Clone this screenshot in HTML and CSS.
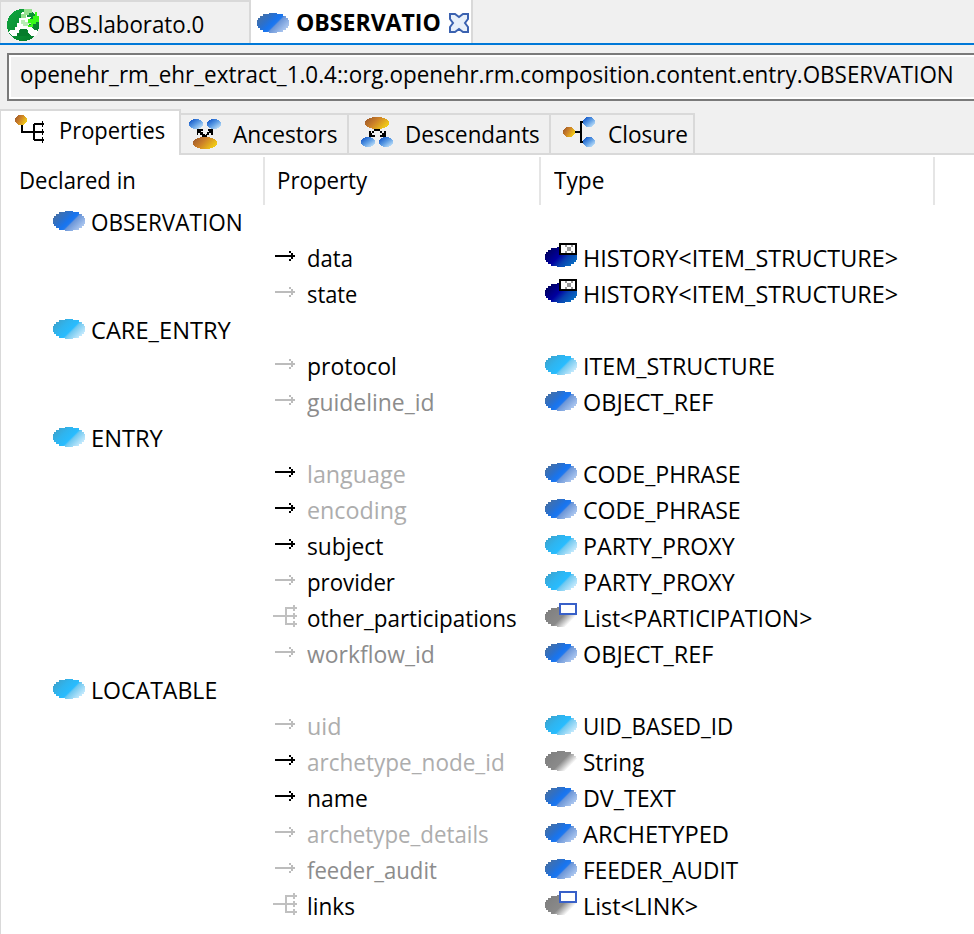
FILE: index.html
```
<!DOCTYPE html>
<html lang="en">
<head>
<meta charset="utf-8">
<title>OBSERVATION</title>
<link rel="stylesheet" href="styles.css">
</head>
<body>
<svg class="defs" width="0" height="0">
  <defs>
    <linearGradient id="g-class" gradientUnits="userSpaceOnUse" x1="3" y1="3" x2="22" y2="22"><stop offset="0" stop-color="#4470a8"/><stop offset=".3" stop-color="#2b70cc"/><stop offset=".5" stop-color="#1874ee"/><stop offset=".6" stop-color="#1f78ee"/><stop offset=".66" stop-color="#6c96d8"/><stop offset="1" stop-color="#a8c4ee"/></linearGradient>
    <linearGradient id="g-abstract" gradientUnits="userSpaceOnUse" x1="3" y1="3" x2="22" y2="22"><stop offset="0" stop-color="#3ca4d0"/><stop offset=".3" stop-color="#2fb4ee"/><stop offset=".6" stop-color="#28bcff"/><stop offset=".67" stop-color="#70c8f0"/><stop offset="1" stop-color="#c0e8fc"/></linearGradient>
    <linearGradient id="g-primitive" gradientUnits="userSpaceOnUse" x1="3" y1="3" x2="22" y2="22"><stop offset="0" stop-color="#808080"/><stop offset=".55" stop-color="#8a8a8a"/><stop offset=".9" stop-color="#fff"/></linearGradient>
    <linearGradient id="g-generic" gradientUnits="userSpaceOnUse" x1="3" y1="3" x2="22" y2="22"><stop offset="0" stop-color="#000060"/><stop offset=".45" stop-color="#0000a0"/><stop offset=".7" stop-color="#0840b0"/><stop offset="1" stop-color="#0868c0"/></linearGradient>
    <linearGradient id="g-orange" x1="0" y1="0" x2="1" y2=".5"><stop offset="0" stop-color="#94522c"/><stop offset=".5" stop-color="#cc8028"/><stop offset="1" stop-color="#f0c818"/></linearGradient>
    <linearGradient id="g-blue" x1="0" y1="0" x2="1" y2="1"><stop offset=".1" stop-color="#1458c8"/><stop offset=".5" stop-color="#5c9ce4"/><stop offset="1" stop-color="#dcf4ff"/></linearGradient>
    <linearGradient id="g-green" x1="0" y1="0" x2="1" y2="1"><stop offset="0" stop-color="#10a840"/><stop offset="1" stop-color="#047828"/></linearGradient>
    <path id="oval" d="M12 0h8v1h6v2h3v2h2v2h1v6h-1v2h-2v2h-3v2h-6v1h-8v-1H6v-2H3v-2H1v-2H0V7h1V5h2V3h3V1h6z"/>
  </defs>
</svg>

<header class="editor-tabs">
  <div class="editor-tab">
    <svg class="archetype-icon" width="32" height="32" viewBox="0 0 32 32" shape-rendering="crispEdges">
      <circle cx="16" cy="16" r="16" fill="url(#g-green)"/>
      <path d="M15 3h5v5h4l-2 4v6h3l2 3h3l1 2-2 4h-5l-3-3v-3h-9v4l-3 2H5l-3-4 1-2h5v-3h2v-4h2V9h2V5z" fill="#fff"/>
      <path d="M13 20h7v4h2v3H10v-3h3z" fill="#067c2c"/>
      <path d="M17 0h8v4h-3v2h-3v3h-5V5h3z" fill="#98e090"/>
      <path d="M14 11h4v2h6v2h-3v2h-5v-2h-2z" fill="#b8ecb4"/>
      <path d="M28 3h2v4h2v6h-3v2h-3v3h-5v-2h3v-2h-3v-4h5V7h2z" fill="#38f818"/>
    </svg>
    <span class="text" data-w="156">OBS.laborato.0</span>
  </div>
  <div class="editor-tab active">
    <svg width="32" height="20" viewBox="0 0 32 20" shape-rendering="crispEdges"><use href="#oval" fill="url(#g-class)"/></svg>
    <b class="text" data-w="145">OBSERVATIO</b>
    <svg class="close-icon" width="20" height="20" viewBox="0 0 20 20"><path d="M1 1h5l4 3 4-3h5v5l-3 4 3 4v5h-5l-4-3-4 3H1v-5l3-4-3-4z" fill="#e8f0fa" stroke="#3b62b0" stroke-width="2"/></svg>
  </div>
</header>

<div class="path-field"><span class="text" data-w="934">openehr_rm_ehr_extract_1.0.4::org.openehr.rm.composition.content.entry.OBSERVATION</span></div>

<nav class="view-tabs">
  <div class="view-tab active">
    <svg width="32" height="30" viewBox="0 0 32 30" shape-rendering="crispEdges"><path d="M7 10v7h22M19 9v16M19 9h10M19 25h10" fill="none" stroke="#000" stroke-width="2"/><path d="M27 6h1v6h-1zM27 14h1v6h-1zM27 22h1v6h-1z"/><ellipse cx="6" cy="5" rx="6" ry="5.2" fill="url(#g-orange)"/></svg>
    <span class="text" data-w="106">Properties</span>
  </div>
  <div class="view-tab ancestors">
    <svg width="32" height="32" viewBox="0 0 32 32" shape-rendering="crispEdges"><ellipse cx="7" cy="7" rx="7" ry="5" fill="url(#g-blue)"/><ellipse cx="25" cy="7" rx="7" ry="5" fill="url(#g-blue)"/><path d="M8 12h6v2h-2v1h2v2h2v1h1v-1h1v-2h2v-1h-1v-2h5v6h-2v-2h-2v2h-2v2h-5v-2h-2v-2h-2v2H8z"/><ellipse cx="16" cy="26" rx="12" ry="6" fill="url(#g-orange)"/></svg>
    <span class="text" data-w="105">Ancestors</span>
  </div>
  <div class="view-tab descendants">
    <svg width="32" height="32" viewBox="0 0 32 32" shape-rendering="crispEdges"><ellipse cx="16" cy="6" rx="12" ry="6" fill="url(#g-orange)"/><path d="M13 12h6v2h2v2h2v-2h2v6h-6v-2h2v-2h-2v-2h-6v2h-2v2h3v2H8v-6h2v2h1v-2h2z"/><ellipse cx="7" cy="25" rx="7" ry="5" fill="url(#g-blue)"/><ellipse cx="25" cy="25" rx="7" ry="5" fill="url(#g-blue)"/></svg>
    <span class="text" data-w="135">Descendants</span>
  </div>
  <div class="view-tab closure">
    <svg width="32" height="32" viewBox="0 0 32 32" shape-rendering="crispEdges"><path d="M12 15h6M22 5h-4v20h4" fill="none" stroke="#000" stroke-width="2"/><ellipse cx="6" cy="15" rx="6" ry="5" fill="url(#g-orange)"/><ellipse cx="26" cy="5" rx="6" ry="5" fill="url(#g-blue)"/><ellipse cx="26" cy="25" rx="6" ry="5" fill="url(#g-blue)"/></svg>
    <span class="text" data-w="80">Closure</span>
  </div>
</nav>

<main class="tree">
  <div class="tree-head">
    <div><span class="text" data-w="117">Declared in</span></div>
    <div><span class="text" data-w="90">Property</span></div>
    <div><span class="text" data-w="50">Type</span></div>
  </div>
  <div id="rows"></div>
</main>
<script src="tree.js"></script>
</body>
</html>
```
FILE: styles.css
```
* { box-sizing: border-box; }
body {
  margin: 0;
  width: 974px;
  height: 934px;
  overflow: hidden;
  background: #f0f0f0;
  color: #000;
  font: 24px/36px "Open Sans", "Noto Sans", sans-serif;
}
svg { display: block; flex: none; }
.defs { position: absolute; }
.text {
  display: inline-block;
  white-space: pre;
  transform-origin: 0 50%;
}

.editor-tabs {
  display: flex;
  height: 45px;
  border-bottom: 2px solid #0078d7;
}
.editor-tab {
  display: flex;
  align-items: flex-start;
  width: 251px;
  padding: 7px 0 0 6px;
  border: solid #d9d9d9;
  border-width: 2px 2px 0 1px;
}
.editor-tab .archetype-icon { margin-right: 9px; }
.editor-tab .text { margin-top: -3px; width: 157px; }
.editor-tab.active {
  width: 222px;
  padding: 13px 0 0 6px;
  background: #fff;
  border-width: 0 2px 0 0;
}
.editor-tab.active .text { margin: -9px 0 0 7px; width: 145px; }
.close-icon { margin-left: 8px; }

.path-field {
  height: 48px;
  margin: 8px 0 0 7px;
  padding: 0 0 0 11px;
  border: 2px solid #7a7a7a;
  border-right: 0;
  box-shadow: inset 2px 2px #fff, inset 0 -2px #fff;
  line-height: 38px;
  overflow: hidden;
}

.view-tabs {
  display: flex;
  align-items: flex-end;
  height: 54px;
  background: linear-gradient(#d9d9d9, #d9d9d9) 0 100% / 100% 2px no-repeat;
}
.view-tab {
  display: flex;
  height: 42px;
  padding: 2px 0 0 8px;
  border: 2px solid #d9d9d9;
  border-left: 0;
}
.view-tab .text { margin: -1px 0 0 12px; width: 0; }
.view-tab.active {
  width: 181px;
  height: 46px;
  padding: 4px 0 0 14px;
  background: #fff;
  border-left: 1px solid #d9d9d9;
  border-bottom: 0;
}
.view-tab.active .text { margin: -3px 0 0 12px; }
.view-tab.ancestors { width: 168px; }
.view-tab.descendants { width: 202px; padding-left: 12px; }
.view-tab.closure { width: 144px; padding-left: 12px; }
.view-tab.closure .text { margin-left: 13px; }

.tree {
  height: 780px;
  padding-left: 18px;
  background: #fff;
  border-left: 1px solid #d9d9d9;
}
.tree-head {
  display: grid;
  grid-template-columns: 246px 276px 394px;
  height: 50px;
  margin-bottom: -1px;
  padding-top: 2px;
}
.tree-head div { border-right: 2px solid #e5e5e5; line-height: 46px; }
.tree-head div + div { padding-left: 12px; }
.tree-head div:last-child { padding-left: 13px; }
.row {
  display: grid;
  grid-template-columns: 254px 272px 1fr;
  height: 36px;
}
.cell { display: flex; align-items: flex-start; }
.cell .text { margin-left: 6px; }
.cell svg { margin-top: 3px; }
.owner { padding-left: 34px; }
.prop .text { margin-left: 2px; }
.type .text { margin-left: 6px; }
.muted { color: #8c8c8c; }
.faint { color: #adadad; }
```
FILE: tree.js
```
const rows = [
  ["OBSERVATION", "class", 152],
  ["data", "arrow-on", "", 46, "HISTORY<ITEM_STRUCTURE>", "generic", 315],
  ["state", "arrow", "", 50, "HISTORY<ITEM_STRUCTURE>", "generic", 315],
  ["CARE_ENTRY", "abstract", 140],
  ["protocol", "arrow", "", 90, "ITEM_STRUCTURE", "abstract", 192],
  ["guideline_id", "arrow", "muted", 128, "OBJECT_REF", "class", 130],
  ["ENTRY", "abstract", 72],
  ["language", "arrow-on", "faint", 99, "CODE_PHRASE", "class", 158],
  ["encoding", "arrow-on", "faint", 100, "CODE_PHRASE", "class", 158],
  ["subject", "arrow-on", "", 76, "PARTY_PROXY", "abstract", 152],
  ["provider", "arrow", "", 88, "PARTY_PROXY", "abstract", 152],
  ["other_participations", "list", "", 210, "List<PARTICIPATION>", "container", 229],
  ["workflow_id", "arrow", "muted", 128, "OBJECT_REF", "class", 130],
  ["LOCATABLE", "abstract", 126],
  ["uid", "arrow", "faint", 34, "UID_BASED_ID", "abstract", 150],
  ["archetype_node_id", "arrow-on", "faint", 198, "String", "primitive", 61],
  ["name", "arrow-on", "", 61, "DV_TEXT", "class", 93],
  ["archetype_details", "arrow", "faint", 182, "ARCHETYPED", "class", 146],
  ["feeder_audit", "arrow", "muted", 130, "FEEDER_AUDIT", "class", 155],
  ["links", "list", "", 48, "List<LINK>", "container", 115]
];

const svg = body => `<svg width="32" height="28" viewBox="0 -4 32 28" shape-rendering="crispEdges">${body}</svg>`;
const oval = fill => `<use href="#oval" fill="url(#g-${fill})"/>`;
const arrow = color => `<path d="M2 8h18v2H2zM16 4h2v2h2v2h2v2h-2v2h-2v2h-2v-2h2V6h-2z" fill="${color}"/>`;
const icons = {
  class: oval("class"),
  abstract: oval("abstract"),
  primitive: oval("primitive"),
  generic: oval("generic") + '<path d="M15-3h16V7H15z" fill="#fff" stroke="#000" stroke-width="2"/><path d="M20-2h2v2h4v-2h2v2h-2v4h2v2h-2V4h-4v2h-2V4h2V0h-2z" fill="#999"/>',
  container: oval("primitive") + '<path d="M15-3h16V7H15z" fill="#fff" stroke="#3860c8" stroke-width="2"/>',
  "arrow-on": arrow("#000"),
  arrow: arrow("#bcbcbc"),
  list: '<path d="M0 8h24v2H0zM12 0h2v18h-2zM12 0h12v2H12zM12 16h12v2H12zM20-2h2v6h-2zM20 6h2v6h-2zM20 14h2v6h-2z" fill="#c0c0c0"/>'
};
const escape = s => s.replace(/</g, "&lt;").replace(/>/g, "&gt;");
const label = (s, w, cls = "") => `<span class="text ${cls}" data-w="${w}">${escape(s)}</span>`;

document.getElementById("rows").innerHTML = rows.map(r => r.length === 3
  ? `<div class="row"><div class="cell owner">${svg(icons[r[1]])}${label(r[0], r[2])}</div></div>`
  : `<div class="row"><div></div><div class="cell prop">${svg(icons[r[1]])}${label(r[0], r[3], r[2])}</div><div class="cell type">${svg(icons[r[5]])}${label(r[4], r[6])}</div></div>`
).join("");

document.querySelectorAll(".text").forEach(el => {
  el.style.transform = `scaleX(${el.dataset.w / el.scrollWidth})`;
});
```
